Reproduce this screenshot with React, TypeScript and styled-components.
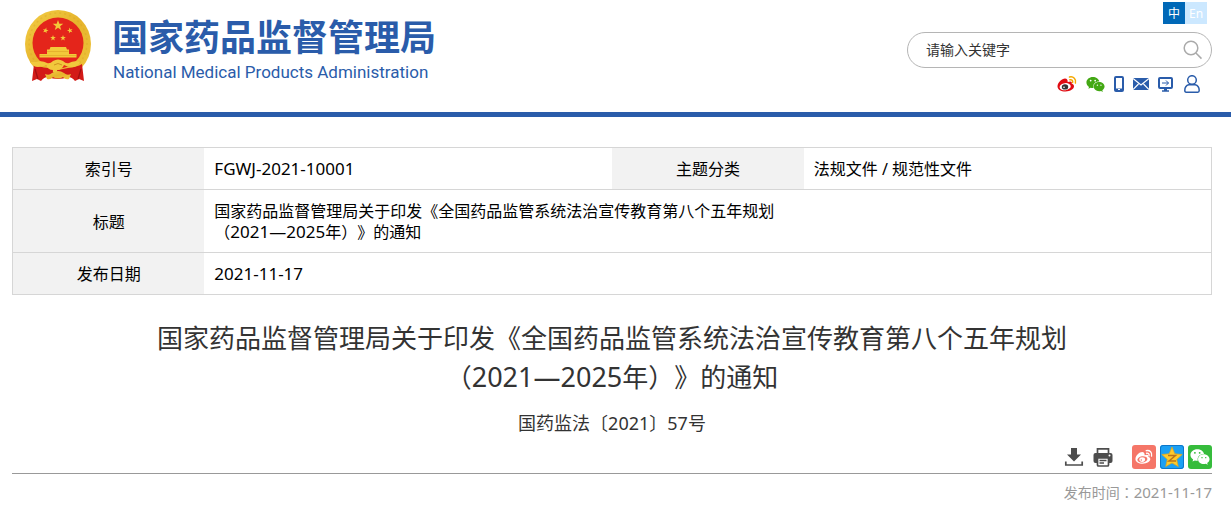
import React from 'react';
import styled, { createGlobalStyle, css } from 'styled-components';
import { FaWeixin } from 'react-icons/fa';

const sans = '"Noto Sans", "Noto Sans CJK SC", sans-serif';

const GlobalStyle = createGlobalStyle`
  * { box-sizing: border-box; }
  body {
    margin: 0;
    background: #fff;
    color: #000;
    font-family: ${sans};
    font-size: 16px;
    line-height: 21px;
    text-spacing-trim: space-all;
  }
  a { color: inherit; text-decoration: none; }
  button, input { font-family: inherit; }
`;

const Header = styled.header`
  display: flex;
  justify-content: space-between;
  padding: 2px 19px 18px 24px;
  border-bottom: 5px solid #2a5caa;
`;

const Brand = styled.a`
  display: flex;
  align-items: flex-start;
  gap: 19px;
  padding-top: 7px;
  color: #2a5caa;
`;

const BrandText = styled.span`
  display: flex;
  flex-direction: column;
`;

const BrandName = styled.span`
  font-family: "Noto Sans CJK SC", sans-serif;
  font-size: 36px;
  line-height: 52px;
  font-weight: 700;
`;

const BrandSub = styled.span`
  padding-left: 1px;
  font-family: Roboto, sans-serif;
  font-size: 17px;
  line-height: 22px;
`;

const Tools = styled.div`
  display: flex;
  flex-direction: column;
  align-items: flex-end;
`;

const Languages = styled.nav`
  display: flex;
  margin-right: 5px;
`;

const Language = styled.a<{ $active?: boolean }>`
  width: 22px;
  height: 22px;
  font-size: 12px;
  line-height: 23px;
  text-align: center;
  color: #fff;
  background: ${(p) => (p.$active ? '#0068b7' : '#cce8ff')};
`;

const SearchForm = styled.form`
  display: flex;
  align-items: center;
  width: 305px;
  height: 36px;
  margin-top: 8px;
  padding: 0 8px 0 18px;
  border: 1px solid #b5b5b5;
  border-radius: 18px;
`;

const SearchInput = styled.input`
  flex: 1;
  min-width: 0;
  padding: 0 0 2px;
  border: 0;
  outline: 0;
  background: none;
  font-size: 14px;
  color: #333;
  &::placeholder { color: #333; opacity: 1; }
`;

const IconButton = styled.button`
  display: flex;
  padding: 0;
  border: 0;
  background: none;
  color: #4d4d4d;
  cursor: pointer;
`;

const QuickLinks = styled.nav`
  display: flex;
  align-items: center;
  gap: 9px;
  height: 20px;
  margin-top: 6px;
  padding-right: 12px;
  color: #2a5caa;
  a { display: flex; }
`;

const Main = styled.main`
  padding: 30px 19px 4px 12px;
`;

const InfoTable = styled.table`
  width: 100%;
  table-layout: fixed;
  border-collapse: collapse;
  border: 1px solid #d6d6d6;
`;

const Row = styled.tr`
  border-bottom: 1px solid #d6d6d6;
`;

const cell = css`
  padding: 11px 10px 9px;
  font-size: 16px;
  font-weight: 400;
`;

const Label = styled.th`
  ${cell}
  width: 16%;
  text-align: center;
  background: #f2f2f2;
`;

const Value = styled.td`
  ${cell}
  width: 34%;
  text-align: left;
`;

const Latin = styled.span<{ $size: number }>`
  font-size: ${(p) => p.$size}px;
  line-height: 1;
`;

const Title = styled.h1`
  margin: 24px 0 0;
  font-size: 26px;
  line-height: 39px;
  font-weight: 400;
  text-align: center;
  color: #333;
`;

const DocNumber = styled.p`
  margin: 13px 0 0;
  font-size: 18px;
  line-height: 27px;
  text-align: center;
  color: #333;
`;

const Actions = styled.div`
  display: flex;
  justify-content: flex-end;
  align-items: center;
  margin-top: 8px;
  padding-bottom: 4px;
  border-bottom: 1px solid #999;
`;

const FileActions = styled.div`
  display: flex;
  gap: 9px;
  margin-right: 19px;
`;

const ShareList = styled.div`
  display: flex;
  gap: 4px;
`;

const Share = styled.a<{ $color: string }>`
  display: flex;
  align-items: center;
  justify-content: center;
  width: 24px;
  height: 24px;
  border-radius: 3px;
  color: #fff;
  background: ${(p) => p.$color};
`;

const Published = styled.p`
  margin: 8px 0 0;
  font-size: 14px;
  line-height: 21px;
  text-align: right;
  color: #999;
`;

const CenteredColon = styled.span`
  font-family: "Noto Sans CJK TC", sans-serif;
`;

const STAR = 'M0-5 1.2-1.6 4.8-1.5 1.9.6 2.9 4 0 2-2.9 4-1.9.6-4.8-1.5-1.2-1.6Z';

function Emblem() {
  return (
    <svg width="69" height="73" viewBox="-1 -1 69 73" aria-hidden="true">
      <defs>
        <linearGradient id="gold" x1="0" y1="0" x2="1" y2="1">
          <stop offset="0" stopColor="#f3cd45" />
          <stop offset=".5" stopColor="#e6b42c" />
          <stop offset="1" stopColor="#f0c63c" />
        </linearGradient>
      </defs>
      <ellipse cx="33" cy="34" rx="33" ry="34" fill="url(#gold)" />
      <ellipse cx="33" cy="33" rx="29" ry="30" fill="none" stroke="#cf9a1e" strokeWidth="1.5" strokeDasharray="2 3" opacity=".3" />
      <circle cx="33" cy="33" r="25.500" fill="#e4251b" />
      <g fill="#f3c93a">
        <path d={STAR} transform="translate(33 15.500) scale(1.100)" />
        <path d={STAR} transform="translate(20.500 20.500) rotate(15) scale(.6)" />
        <path d={STAR} transform="translate(45 20.500) rotate(-15) scale(.6)" />
        <path d={STAR} transform="translate(28 28) scale(.6)" />
        <path d={STAR} transform="translate(38 28) scale(.6)" />
        <path d="M25.500 37h15.500l1 2.500h2V44h7.500v3.500h-37V44H22v-4.500h2.500Z" />
      </g>
      <path d="M22 41.500h21.500M15 45.500h36.500" stroke="#d99a20" strokeWidth=".5" />
      <path d="M9 54q5 3 14 4l10 2 10-2q9-1 14-4l2 17-5-2-4 2q-3-4-7-4-10 4-20 0-4 0-7 4l-4-2-5 2Z" fill="#d31a17" />
      <path d="M11 52q6-2 11 1 3 1 6-2 5-3 10 0 3 3 6 2 5-3 11-1-2 5-8 5-5 0-8-2-2 5-7 5 1 2-2 3-3-1-2-3-5 0-7-5-3 2-8 2-5 0-8-5Z" fill="#f1c83c" />
      <path d="M29 55q4-3 8 0" fill="none" stroke="#d09220" />
      <path d="M20 64q4 2 7-1 6-4 12 0 3 3 7 1l-2 5q-4 1-6-2-5 3-10 0-2 3-6 2Z" fill="url(#gold)" />
      <path d="m10 59 3 10M56 59l-3 10" stroke="#a30f10" strokeWidth="1.300" />
    </svg>
  );
}

function SearchIcon() {
  return (
    <svg width="20" height="20" viewBox="0 0 20 20" fill="none" stroke="#aaa" strokeWidth="1.500" aria-hidden="true">
      <circle cx="8" cy="8" r="6.800" />
      <path d="m12.900 13 5.600 5.600" />
    </svg>
  );
}

function WeiboIcon({ size, body, wave, eye, pupil }: { size: number; body: string; wave: string; eye: string; pupil: string }) {
  return (
    <svg width={size} height={size} viewBox="0 0 20 20" aria-hidden="true">
      <path d="M8 4.500c-3 0-7.500 4-7.500 8 0 3 3.500 5 8 5 5 0 8.500-2.500 8.500-5.200 0-1.600-1.200-2.300-2.300-2.600.7-2-.8-3-4-1.700.1-2-.7-3.500-2.700-3.500Z" fill={body} />
      <ellipse cx="8.200" cy="12.700" rx="5.600" ry="3.500" fill={eye} transform="rotate(-8 8 12.700)" />
      <ellipse cx="8" cy="12.900" rx="3.200" ry="2.700" fill={pupil} />
      <circle cx="7" cy="13.300" r=".8" fill={eye} />
      <path d="M12.500 3c4-.9 6.900 2 5.900 6M12.900 5.800c1.900-.4 3.200.8 2.700 2.800" fill="none" stroke={wave} strokeWidth="1.500" strokeLinecap="round" />
    </svg>
  );
}

function PhoneIcon() {
  return (
    <svg width="10" height="16" viewBox="0 0 10 16" aria-hidden="true">
      <rect x="1" y="1" width="8" height="14" rx="1" fill="none" stroke="currentColor" strokeWidth="2" />
      <path d="M1 12.500h8V15H1Z" fill="currentColor" />
      <path d="M4 13h2v1H4Z" fill="#fff" />
    </svg>
  );
}

function MailIcon() {
  return (
    <svg width="16" height="12" viewBox="0 0 16 12" aria-hidden="true">
      <path d="M0 0h16v12H0Z" fill="currentColor" />
      <path d="m0 .5 8 6.500 8-6.500M0 11.500l5.500-5.500M16 11.500 10.500 6" fill="none" stroke="#fff" strokeWidth="1.200" />
    </svg>
  );
}

function MonitorIcon() {
  return (
    <svg width="15" height="15" viewBox="0 0 15 15" fill="none" stroke="currentColor" aria-hidden="true">
      <rect x="1" y="1" width="13" height="10" rx="1" strokeWidth="2" />
      <path d="M4 6h6.500M8 3.500 10.500 6 8 8.500" />
      <path d="M6 11.500h3V14H6Z" fill="currentColor" stroke="none" />
      <path d="M4 14h7" strokeWidth="1.500" />
    </svg>
  );
}

function UserIcon() {
  return (
    <svg width="18" height="18" viewBox="-2 0 18 18" fill="none" stroke="currentColor" strokeWidth="1.500" aria-hidden="true">
      <circle cx="8" cy="5" r="4.300" />
      <path d="M.8 15.500c0-3 1.400-5.100 4-5.700h6.400c2.600.6 4 2.700 4 5.700 0 1-.5 1.700-1.400 1.700H2.200c-.9 0-1.400-.7-1.400-1.700Z" />
    </svg>
  );
}

function DownloadIcon() {
  return (
    <svg width="20" height="20" viewBox="0 0 20 20" fill="currentColor" aria-hidden="true">
      <path d="M7 1h6v6.500h4L10 14.500 3 7.500h4Z" />
      <path d="M1.800 14.500v3.500h16.400v-3.500" fill="none" stroke="currentColor" strokeWidth="1.700" />
    </svg>
  );
}

function PrintIcon() {
  return (
    <svg width="20" height="20" viewBox="0 0 20 20" aria-hidden="true">
      <path d="M4.500 6V1.800h11V6" fill="none" stroke="currentColor" strokeWidth="1.700" />
      <rect x=".5" y="6" width="19" height="10" rx="2" fill="currentColor" />
      <rect x="4.500" y="10.800" width="11" height="8.200" rx="1" fill="#fff" stroke="currentColor" strokeWidth="1.700" />
      <path d="M6.500 13.500h7M6.500 16h4.500" stroke="currentColor" strokeWidth="1.300" />
      <circle cx="16.500" cy="8.500" r="1" fill="#fff" />
    </svg>
  );
}

function QzoneIcon() {
  return (
    <svg width="24" height="24" viewBox="0 0 24 24" aria-hidden="true">
      <rect x=".5" y=".5" width="23" height="23" rx="2.500" fill="#1ba0f4" stroke="#0d76c8" />
      <path d="m12 2 2.800 6.800 7.400.7-5.500 4.900 1.600 7.200-6.300-3.700-6.300 3.700 1.600-7.200-5.500-4.900 7.400-.7Z" fill="#fdca2c" stroke="#e0a51a" strokeWidth=".7" strokeLinejoin="round" />
      <path d="M8 10.500h7.500L9 16h7" fill="none" stroke="#b8741a" strokeWidth="1.500" />
    </svg>
  );
}

export default function App() {
  return (
    <>
      <GlobalStyle />
      <Header>
        <Brand href="#">
          <Emblem />
          <BrandText>
            <BrandName>国家药品监督管理局</BrandName>
            <BrandSub>National Medical Products Administration</BrandSub>
          </BrandText>
        </Brand>
        <Tools>
          <Languages aria-label="语言">
            <Language href="#" $active>中</Language>
            <Language href="#">En</Language>
          </Languages>
          <SearchForm role="search">
            <SearchInput type="text" placeholder="请输入关键字" aria-label="请输入关键字" />
            <IconButton type="button" aria-label="搜索"><SearchIcon /></IconButton>
          </SearchForm>
          <QuickLinks aria-label="快捷入口">
            <a href="#" aria-label="微博"><WeiboIcon size={20} body="#e00b12" wave="#f5a800" eye="#fff" pupil="#333" /></a>
            <a href="#" aria-label="微信"><FaWeixin size={19} color="#43a814" /></a>
            <a href="#" aria-label="手机版"><PhoneIcon /></a>
            <a href="#" aria-label="邮箱"><MailIcon /></a>
            <a href="#" aria-label="电脑版"><MonitorIcon /></a>
            <a href="#" aria-label="登录"><UserIcon /></a>
          </QuickLinks>
        </Tools>
      </Header>
      <Main>
        <InfoTable>
          <tbody>
            <Row>
              <Label scope="row">索引号</Label>
              <Value><Latin $size={17}>FGWJ-2021-10001</Latin></Value>
              <Label scope="row">主题分类</Label>
              <Value>法规文件 / 规范性文件</Value>
            </Row>
            <Row>
              <Label scope="row">标题</Label>
              <Value colSpan={3}>
                国家药品监督管理局关于印发《全国药品监管系统法治宣传教育第八个五年规划<br />
                （<Latin $size={17}>2021—2025</Latin>年）》的通知
              </Value>
            </Row>
            <Row>
              <Label scope="row">发布日期</Label>
              <Value colSpan={3}><Latin $size={17}>2021-11-17</Latin></Value>
            </Row>
          </tbody>
        </InfoTable>
        <Title>
          国家药品监督管理局关于印发《全国药品监管系统法治宣传教育第八个五年规划<br />
          （<Latin $size={27}>2021—2025</Latin>年）》的通知
        </Title>
        <DocNumber>国药监法〔2021〕57号</DocNumber>
        <Actions>
          <FileActions>
            <IconButton type="button" aria-label="下载"><DownloadIcon /></IconButton>
            <IconButton type="button" aria-label="打印"><PrintIcon /></IconButton>
          </FileActions>
          <ShareList>
            <Share href="#" aria-label="分享到微博" $color="#f57668"><WeiboIcon size={18} body="#fff" wave="#fff" eye="#f57668" pupil="#fff" /></Share>
            <Share href="#" aria-label="分享到QQ空间" $color="#1ba0f4"><QzoneIcon /></Share>
            <Share href="#" aria-label="分享到微信" $color="#36bc3c"><FaWeixin size={20} /></Share>
          </ShareList>
        </Actions>
        <Published>
          发布时间<CenteredColon>：</CenteredColon><Latin $size={15}>2021-11-17</Latin>
        </Published>
      </Main>
    </>
  );
}
